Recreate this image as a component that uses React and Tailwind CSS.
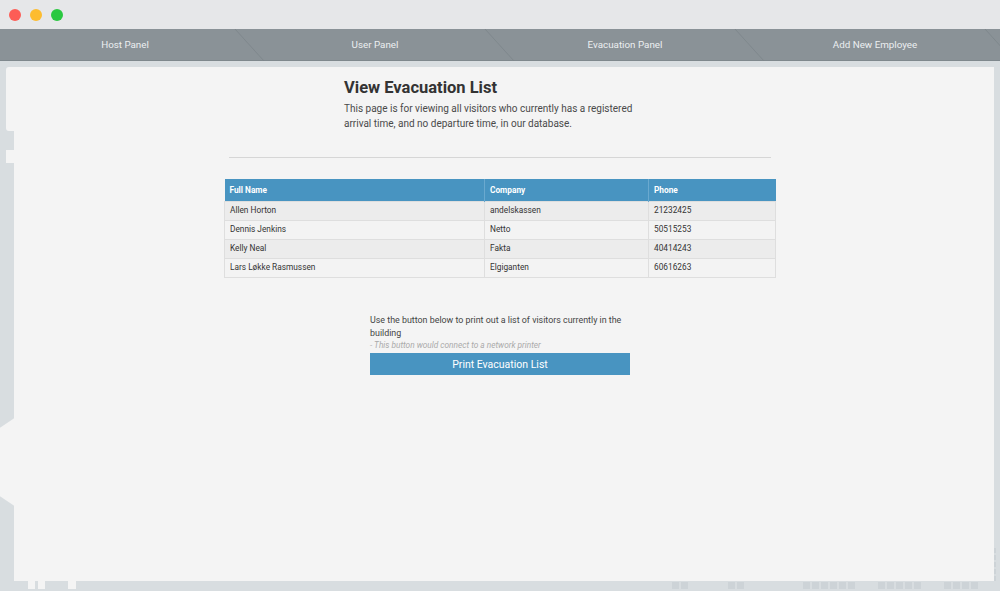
import React from 'react'

const navItems = ['Host Panel', 'User Panel', 'Evacuation Panel', 'Add New Employee']

const visitors = [
  { name: 'Allen Horton', company: 'andelskassen', phone: '21232425' },
  { name: 'Dennis Jenkins', company: 'Netto', phone: '50515253' },
  { name: 'Kelly Neal', company: 'Fakta', phone: '40414243' },
  { name: 'Lars Løkke Rasmussen', company: 'Elgiganten', phone: '60616263' },
]

function NavBar() {
  return (
    <div className="relative flex h-[32px] bg-[#8a9297] border-b border-[#7f888d]">
      {navItems.map((item) => (
        <div key={item} className="relative flex flex-1 items-center justify-center pt-[2px] text-[9.8px] text-[#eceff1]">
          {item}
          <svg className="absolute right-[-16px] top-0 h-[32px] w-[32px]" viewBox="0 0 32 32">
            <line x1="1" y1="0" x2="30" y2="32" stroke="#7c858a" strokeWidth="0.8" />
          </svg>
        </div>
      ))}
    </div>
  )
}

function VisitorTable() {
  return (
    <table className="w-[552px] border-collapse text-[8.3px] text-[#333]">
      <thead>
        <tr className="h-[22px] bg-[#4894c1] text-left text-white">
          <th className="w-[260px] border-r border-[#6aa9cf] px-[5px] font-bold">Full Name</th>
          <th className="w-[164px] border-r border-[#6aa9cf] px-[5px] font-bold">Company</th>
          <th className="px-[5px] font-bold">Phone</th>
        </tr>
      </thead>
      <tbody>
        {visitors.map((v, i) => (
          <tr key={v.name} className={i % 2 === 0 ? 'h-[19px] bg-[#ececec]' : 'h-[19px] bg-[#f3f3f3]'}>
            <td className="border border-[#dedede] px-[5px]">{v.name}</td>
            <td className="border border-[#dedede] px-[5px]">{v.company}</td>
            <td className="border border-[#dedede] px-[5px]">{v.phone}</td>
          </tr>
        ))}
      </tbody>
    </table>
  )
}

function Ticks({ count }) {
  return (
    <div className="flex gap-[2px]">
      {Array.from({ length: count }).map((_, i) => (
        <span key={i} className="h-[7px] w-[7px] bg-[#cdd3d7]" />
      ))}
    </div>
  )
}

export default function App() {
  return (
    <div className="relative flex h-[591px] w-full flex-col overflow-hidden bg-[#d8dde0]" style={{ fontFamily: 'Roboto, "Liberation Sans", sans-serif' }}>
      <div className="flex h-[29px] items-center gap-[9px] bg-[#e6e7e9] pl-[9px]">
        <span className="h-[12px] w-[12px] rounded-full bg-[#fd5d56]" />
        <span className="h-[12px] w-[12px] rounded-full bg-[#fdbc2f]" />
        <span className="h-[12px] w-[12px] rounded-full bg-[#2ac840]" />
      </div>
      <NavBar />

      <div className="relative flex-1 pt-[6px] pl-[14px] pr-[6px] pb-[10px]">
        {/* frame decorations */}
        <div className="absolute left-[6px] top-[6px] h-[64px] w-[172px] rounded-[3px] bg-[#f4f4f4]" />
        <div className="absolute left-[6px] top-[89px] h-[13px] w-[10px] bg-[#f4f4f4]" />
        <div className="absolute left-0 top-[356px] h-[90px] w-[16px] bg-[#f4f4f4]" style={{ clipPath: 'polygon(100% 0, 100% 100%, 0 88%, 0 12%)' }} />
        <div className="absolute bottom-[2px] left-[28px] flex gap-[3px]">
          <span className="h-[8px] w-[7px] bg-[#f4f4f4]" />
          <span className="h-[8px] w-[7px] bg-[#f4f4f4]" />
          <span className="ml-[20px] h-[8px] w-[8px] bg-[#f4f4f4]" />
        </div>
        <div className="absolute bottom-[2px] left-[672px] flex gap-[40px]">
          <Ticks count={2} />
          <Ticks count={2} />
        </div>
        <div className="absolute bottom-[2px] left-[803px] flex gap-[23px]">
          <Ticks count={6} />
          <Ticks count={5} />
          <Ticks count={4} />
        </div>
        <div className="absolute bottom-[10px] right-[4px] flex flex-col gap-[2px]">
          <span className="h-[5px] w-[6px] bg-[#cdd3d7]" />
          <span className="h-[5px] w-[6px] bg-[#cdd3d7]" />
          <span className="h-[5px] w-[6px] bg-[#cdd3d7]" />
          <span className="h-[5px] w-[6px] bg-[#cdd3d7]" />
          <span className="h-[5px] w-[6px] bg-[#cdd3d7]" />
        </div>

        <div className="relative h-full rounded-tl-[2px] bg-[#f4f4f4] pt-[10px]">
          <div className="ml-[210px] w-[552px]">
            <div className="mx-auto w-[312px]">
              <h1 className="text-[16.5px] font-bold leading-[22px] text-[#333]">View Evacuation List</h1>
              <p className="mt-[2px] text-[10px] leading-[15px] text-[#4a4a4a]">
                This page is for viewing all visitors who currently has a registered arrival time, and no departure time, in our database.
              </p>
            </div>
            <hr className="mx-[5px] mt-[26px] border-t border-[#d6d6d6]" />
            <div className="mt-[21px]">
              <VisitorTable />
            </div>
            <div className="mx-auto mt-[36px] w-[260px]">
              <p className="text-[8.9px] leading-[13px] text-[#444]">
                Use the button below to print out a list of visitors currently in the building
              </p>
              <p className="text-[8.3px] italic leading-[11px] text-[#aaaaaa]">- This button would connect to a network printer</p>
              <button className="mt-[1px] h-[22px] w-full bg-[#4894c1] text-[10.5px] text-white">Print Evacuation List</button>
            </div>
          </div>
        </div>
      </div>
    </div>
  )
}
